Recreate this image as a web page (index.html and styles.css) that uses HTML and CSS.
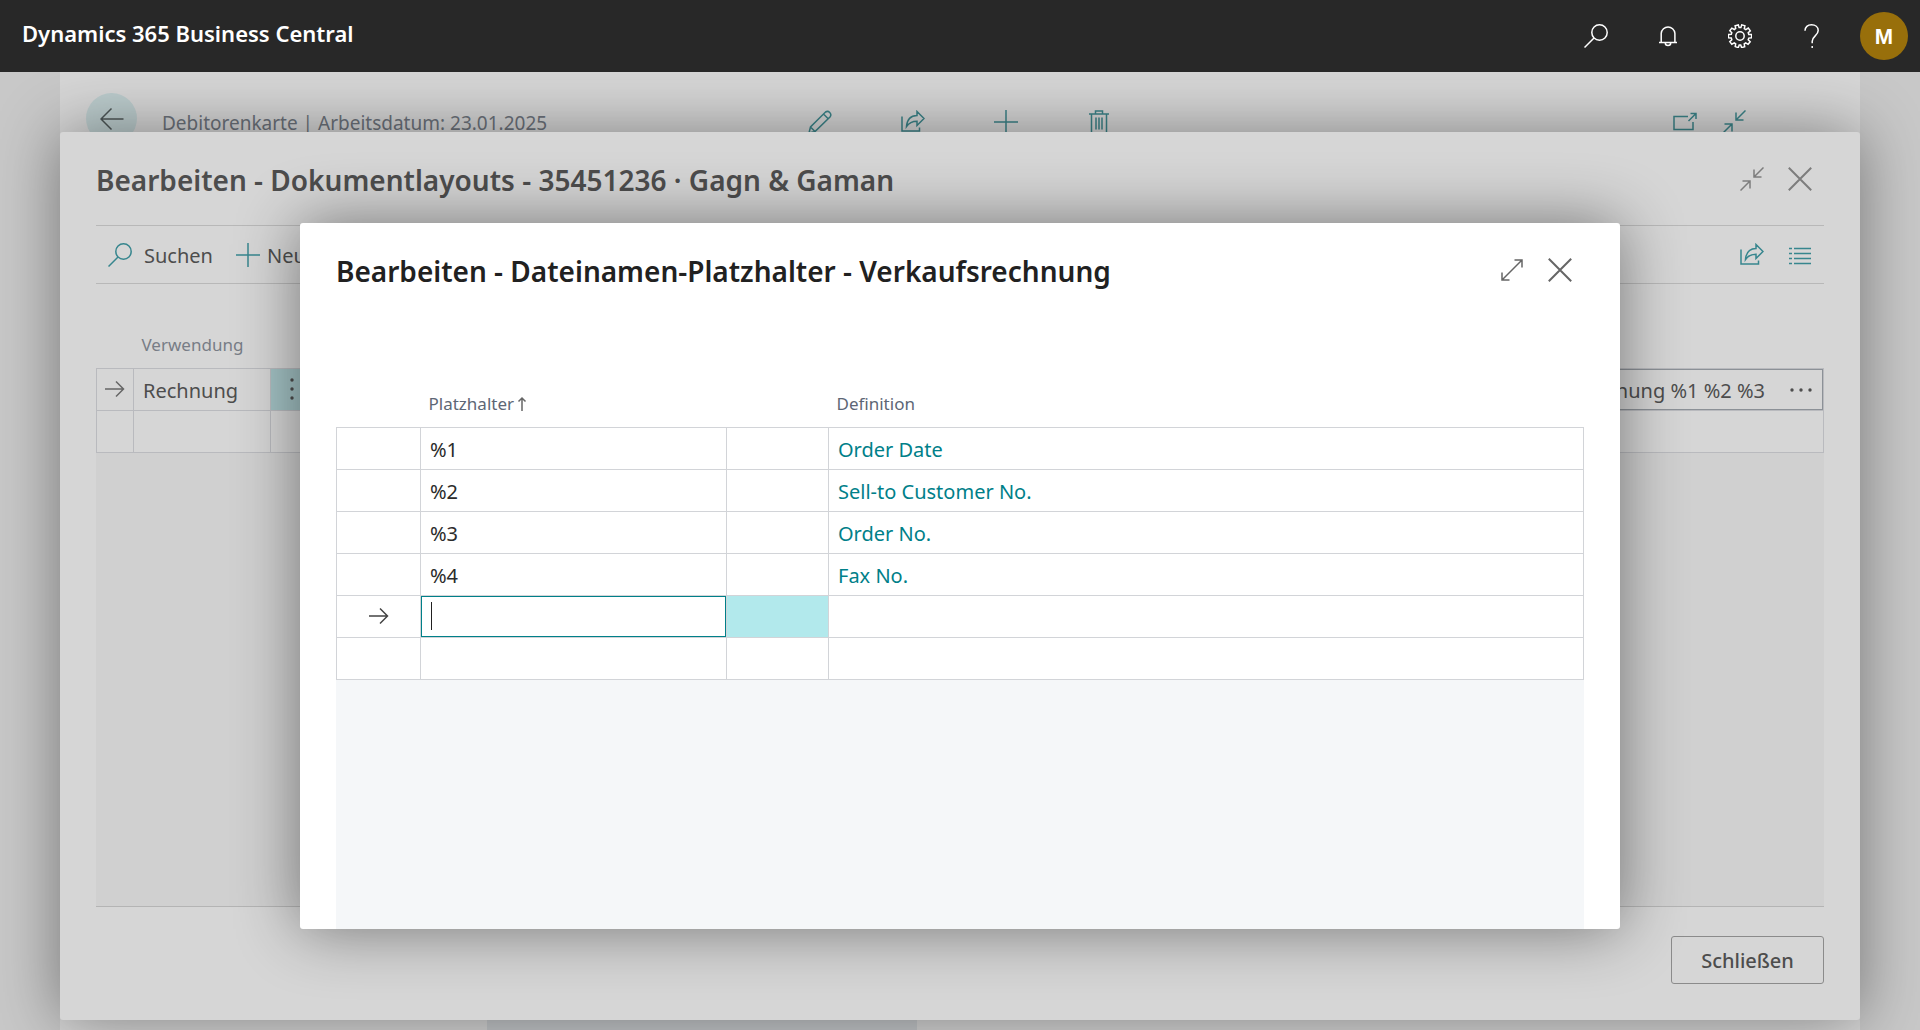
FILE: index.html
```html
<!DOCTYPE html>
<html lang="de">
<head>
<meta charset="utf-8">
<meta name="viewport" content="width=device-width, initial-scale=1">
<title>Dynamics 365 Business Central</title>
<link rel="stylesheet" href="styles.css">
</head>
<body>
<svg class="sprite" aria-hidden="true">
  <symbol id="i-search" viewBox="0 0 24 24"><circle cx="15.500" cy="8.500" r="7.700"/><path d="M10 14 .5 23.500"/></symbol>
  <symbol id="i-plus" viewBox="0 0 24 24"><path d="M12 0v24M0 12h24"/></symbol>
  <symbol id="i-share" viewBox="0 0 24 24"><path d="M1 6.500v14.500h17.500v-3.500M5.500 16.500c.5-6.500 4-10.800 10.500-11V1.500l7 7-7 7v-4.300c-4.800 0-8 1.600-10.500 5.300z"/></symbol>
  <symbol id="i-collapse" viewBox="0 0 24 24"><path d="M23.500.5 14 10M14 2.500V10h7.500M.5 23.500 10 14M2.500 14H10v7.500"/></symbol>
  <symbol id="i-expand" viewBox="0 0 24 24"><path d="M2 22 22 2M14.500 2H22v7.500M2 14.500V22h7.500"/></symbol>
  <symbol id="i-close" viewBox="0 0 24 24"><path d="m.8.800 22.400 22.400M23.200.8.800 23.200"/></symbol>
  <symbol id="i-arrow" viewBox="0 0 20 20"><path d="M0 10h18.500M11 2.500l7.500 7.500-7.500 7.500"/></symbol>
</svg>

<header class="topbar">
  <a class="brand" href="#">Dynamics 365 Business Central</a>
  <nav class="topbar-actions" aria-label="Globale Aktionen">
    <button class="top-button" type="button" aria-label="Suchen"><svg class="icon"><use href="#i-search"/></svg></button>
    <button class="top-button" type="button" aria-label="Benachrichtigungen"><svg class="icon" viewBox="0 0 24 24"><path d="M3 18.500h18M5.200 18.500V9.300a6.900 7.300 0 0 1 13.700 0v9.200M9.300 19a2.700 2.500 0 0 0 5.400 0"/></svg></button>
    <button class="top-button" type="button" aria-label="Einstellungen"><svg class="icon" viewBox="0 0 24 24"><circle cx="12" cy="12" r="4.200"/><path d="M10.300.9h0l.8 2.700h1.800l.8-2.700 3.200.9-.6 2.800 1.500 1 2.500-1.500 2 2.700-2.100 1.900.6 1.700 2.800.1v3.300l-2.800.3-.6 1.600 2 2-2.100 2.600-2.400-1.500-1.500 1.100.5 2.800-3.100.9-.9-2.700h-1.500l-.9 2.700-3.100-1 .5-2.700-1.400-1.100-2.500 1.400-2-2.600 2-1.900-.5-1.700-2.900-.3v-3.200l2.900-.2.500-1.600-2-2 2-2.600 2.500 1.400 1.400-1.100-.6-2.700z"/></svg></button>
    <button class="top-button" type="button" aria-label="Hilfe"><svg class="icon" viewBox="0 0 24 24"><path d="M5 6.800C5 3 7.700.8 11.500.8s6.700 2.200 6.700 5.700c0 5-6 5.700-6 10.700v2M12.200 22v2"/></svg></button>
    <button class="top-button" type="button" aria-label="Konto"><span class="avatar">M</span></button>
  </nav>
</header>

<main class="workspace">
  <section class="card-page">
    <div class="card-head">
      <button class="back" type="button" aria-label="Zurück"><svg class="icon" viewBox="0 0 24 24"><path d="M23.500 12H1M11.500 1.500 1 12l10.500 10.500"/></svg></button>
      <p class="crumb">Debitorenkarte | Arbeitsdatum: 23.01.2025</p>
      <div class="card-actions">
        <button class="tool" type="button" aria-label="Bearbeiten"><svg class="icon" viewBox="0 0 24 24"><path d="M1 23l1.500-6L17.500 2a3.400 3.400 0 0 1 4.700 4.700L7 21.500zM15.500 4l4.700 4.700M2.500 17l4.500 4.500"/></svg></button>
        <button class="tool" type="button" aria-label="Teilen"><svg class="icon"><use href="#i-share"/></svg></button>
        <button class="tool" type="button" aria-label="Neu"><svg class="icon"><use href="#i-plus"/></svg></button>
        <button class="tool" type="button" aria-label="Löschen"><svg class="icon" viewBox="0 0 24 24"><path d="M2 4h20M4.500 4v19h15V4M8.500 4V1h7v3M9 7.500v12M12 7.500v12M15 7.500v12"/></svg></button>
      </div>
      <div class="card-window">
        <button class="tool" type="button" aria-label="In neuem Fenster öffnen"><svg class="icon" viewBox="0 0 24 24"><path d="M15 6.500H1v13h19V12M15.500 11 23 3.500M17.500 3.500H23V9"/></svg></button>
        <button class="tool" type="button" aria-label="Verkleinern"><svg class="icon"><use href="#i-collapse"/></svg></button>
      </div>
    </div>
    <div class="card-tile"></div>
  </section>
</main>

<div class="layer layer-back">
  <section class="dialog dialog-back" role="dialog" aria-labelledby="t1">
    <div class="dialog-head">
      <h1 class="dialog-title" id="t1">Bearbeiten - Dokumentlayouts - 35451236 · Gagn &amp; Gaman</h1>
      <div class="dialog-window">
        <button class="tool" type="button" aria-label="Verkleinern"><svg class="icon"><use href="#i-collapse"/></svg></button>
        <button class="tool close" type="button" aria-label="Dialog schließen"><svg class="icon"><use href="#i-close"/></svg></button>
      </div>
    </div>
    <div class="toolbar">
      <button class="command" type="button"><svg class="icon"><use href="#i-search"/></svg><span class="label">Suchen</span></button>
      <button class="command" type="button"><svg class="icon"><use href="#i-plus"/></svg><span class="label">Neu</span></button>
      <div class="toolbar-end">
        <button class="tool" type="button" aria-label="Teilen"><svg class="icon"><use href="#i-share"/></svg></button>
        <button class="tool" type="button" aria-label="Listenansicht"><svg class="icon" viewBox="0 0 24 24"><path d="M1 5.500h3M6 5.500h17M1 10.500h3M6 10.500h17M1 15.500h3M6 15.500h17M1 20.500h3M6 20.500h17"/></svg></button>
      </div>
    </div>
    <div class="sheet">
      <table class="grid">
        <colgroup><col class="c-mark"><col class="c-use"><col class="c-menu"><col></colgroup>
        <thead><tr><th></th><th scope="col">Verwendung</th><th></th><th></th></tr></thead>
        <tbody>
          <tr><td class="mark"><svg class="icon"><use href="#i-arrow"/></svg></td><td>Rechnung</td>
            <td class="menu"><button class="row-menu" type="button" aria-label="Zeilenmenü"><svg class="icon dots" viewBox="0 0 24 24"><circle cx="12" cy="3" r="1.700"/><circle cx="12" cy="12" r="1.700"/><circle cx="12" cy="21" r="1.700"/></svg></button></td>
            <td class="edit"><div class="lookup"><input class="lookup-input" type="text" aria-label="Dateiname" value="Rechnung %1 %2 %3"><button class="row-menu" type="button" aria-label="Auswählen"><svg class="icon dots" viewBox="0 0 24 24"><circle cx="3" cy="12" r="1.700"/><circle cx="12" cy="12" r="1.700"/><circle cx="21" cy="12" r="1.700"/></svg></button></div></td></tr>
          <tr><td></td><td></td><td></td><td></td></tr>
        </tbody>
      </table>
    </div>
    <div class="dialog-foot"><button class="primary" type="button">Schließen</button></div>
  </section>
</div>

<div class="layer layer-front">
  <section class="dialog dialog-front" role="dialog" aria-modal="true" aria-labelledby="t2">
    <div class="dialog-head">
      <h2 class="dialog-title" id="t2">Bearbeiten - Dateinamen-Platzhalter - Verkaufsrechnung</h2>
      <div class="dialog-window">
        <button class="tool" type="button" aria-label="Vergrößern"><svg class="icon"><use href="#i-expand"/></svg></button>
        <button class="tool close" type="button" aria-label="Dialog schließen"><svg class="icon"><use href="#i-close"/></svg></button>
      </div>
    </div>
    <div class="sheet">
      <table class="grid">
        <colgroup><col class="p-mark"><col class="p-name"><col class="p-menu"><col></colgroup>
        <thead><tr><th></th><th scope="col"><span class="sort">Platzhalter<svg class="icon sort-icon" viewBox="0 0 10 16"><path d="M5 15V2M1.500 5.500 5 2l3.500 3.500"/></svg></span></th><th></th><th scope="col">Definition</th></tr></thead>
        <tbody>
          <tr><td></td><td>%1</td><td></td><td><a href="#">Order Date</a></td></tr>
          <tr><td></td><td>%2</td><td></td><td><a href="#">Sell-to Customer No.</a></td></tr>
          <tr><td></td><td>%3</td><td></td><td><a href="#">Order No.</a></td></tr>
          <tr><td></td><td>%4</td><td></td><td><a href="#">Fax No.</a></td></tr>
          <tr><td class="mark"><svg class="icon"><use href="#i-arrow"/></svg></td><td class="edit"><input class="cell-input" type="text" aria-label="Platzhalter"></td><td class="active"></td><td></td></tr>
          <tr><td></td><td></td><td></td><td></td></tr>
        </tbody>
      </table>
    </div>
  </section>
</div>
</body>
</html>
```
FILE: styles.css
```css
*, *::before, *::after { box-sizing: border-box; }

html, body { height: 100%; }

body {
  margin: 0;
  display: flex;
  flex-direction: column;
  overflow: hidden;
  background: #c8c8c8;
  color: #2b2b2b;
  font: 20px/28px "Segoe UI", "Noto Sans", sans-serif;
}

h1, h2, p { margin: 0; }
a { color: #008089; text-decoration: none; }
button, input { font: inherit; color: inherit; }
button { padding: 0; border: 0; background: none; }

.sprite { display: none; }

.icon {
  display: block;
  flex: none;
  width: 24px;
  height: 24px;
  fill: none;
  stroke: currentColor;
  stroke-width: 1.5;
}

.dots { fill: currentColor; stroke: none; }

/* Top bar */
.topbar {
  position: relative;
  z-index: 3;
  flex: none;
  display: flex;
  align-items: center;
  justify-content: space-between;
  height: 72px;
  padding-left: 22px;
  background: #282828;
  color: #fff;
}

.brand {
  padding-bottom: 6px;
  color: #fff;
  font-size: 22px;
  font-weight: 600;
}

.topbar-actions { display: flex; }

.top-button {
  display: grid;
  place-items: center;
  width: 72px;
  height: 72px;
}

.avatar {
  width: 48px;
  height: 48px;
  border-radius: 50%;
  background: #986f0b;
  font: bold 22px/50px "Liberation Sans", sans-serif;
  text-align: center;
}

/* Page behind the dialogs */
.workspace {
  flex: 1;
  display: flex;
  padding: 0 60px;
}

.card-page {
  flex: 1;
  display: flex;
  flex-direction: column;
  justify-content: space-between;
  background: #d6d6d6;
}

.card-head {
  display: grid;
  grid-template-columns: 51px 389px 1fr auto;
  align-items: center;
  column-gap: 25px;
  padding: 21px 114px 0 26px;
  color: #3b8388;
}

.back {
  display: grid;
  place-items: center;
  width: 51px;
  height: 51px;
  border-radius: 50%;
  background: #bccccd;
  color: #4d5556;
}

.crumb {
  padding-top: 8px;
  color: #6c727b;
  font-size: 19px;
  white-space: nowrap;
}

.card-actions {
  display: flex;
  gap: 69px;
  padding: 6px 0 0 232px;
}

.card-window {
  display: flex;
  gap: 25px;
  padding-top: 6px;
}

.card-tile {
  width: 430px;
  height: 24px;
  margin-left: 427px;
  background: #c5c8cb;
}

/* Dialogs */
.layer {
  position: absolute;
  inset: 0;
  display: flex;
}

.layer-back { z-index: 1; padding: 132px 60px 10px; }
.layer-front { z-index: 2; padding: 223px 300px 101px; }

.dialog {
  flex: 1;
  display: flex;
  flex-direction: column;
  min-width: 0;
  padding: 0 36px;
  border-radius: 3px;
  overflow: hidden;
}

.dialog-back {
  background: #d6d6d6;
  color: #4d4d4d;
  box-shadow: 0 0 64px rgba(0, 0, 0, 0.42);
}

.dialog-front {
  background: #fff;
  box-shadow: 0 0 64px rgba(0, 0, 0, 0.46);
}

.dialog-head {
  flex: none;
  display: flex;
  align-items: center;
  justify-content: space-between;
  height: 93px;
  padding: 0 12px 0 0;
}

.dialog-title {
  padding-top: 2px;
  color: #212121;
  font-size: 28px;
  font-weight: 600;
  line-height: 40px;
  white-space: nowrap;
}

.dialog-back .dialog-title { color: #4d4d4d; }

.dialog-window { display: flex; gap: 24px; color: #666; }
.dialog-back .dialog-window { color: #7d7d7d; }
.close .icon { stroke-width: 2; }

.toolbar {
  flex: none;
  display: flex;
  align-items: center;
  gap: 23px;
  height: 59px;
  padding: 0 12px;
  border: solid #b8b8b8;
  border-width: 1px 0;
}

.command {
  display: flex;
  align-items: center;
  gap: 7px;
}

.command:first-child { gap: 12px; }
.label { padding-top: 2px; }
.toolbar .icon { color: #37868e; }
.toolbar-end { display: flex; gap: 24px; margin-left: auto; }

.sheet { flex: 1; min-height: 0; }

.grid {
  width: 100%;
  table-layout: fixed;
  border-collapse: collapse;
}

.grid th {
  height: 84px;
  padding: 0 8px 11px;
  color: #5d6675;
  font-size: 17px;
  font-weight: 400;
  line-height: 24px;
  text-align: left;
  vertical-align: bottom;
}

.grid td {
  height: 42px;
  padding: 3px 9px 0;
  border: 1px solid #d2d4d8;
  background: #fff;
}

.grid .edit, .grid .menu, .grid .mark { padding: 0; }
.mark .icon { width: 20px; height: 20px; margin: 0 auto; color: #444; }

.dialog-back .sheet { background: linear-gradient(#d6d6d6 120px, #d0d0d0 120px); border-bottom: 1px solid #b4b4b4; }
.dialog-back .grid td { border-color: #b9babe; background: #d6d6d6; }
.dialog-back .grid th { color: #787d86; }
.dialog-back .grid .menu { background: #a3c2c4; }
.dialog-back .mark .icon { color: #666; }

.c-mark { width: 37px; }
.c-use { width: 137px; }
.c-menu { width: 48px; }

.row-menu {
  display: grid;
  place-items: center;
  width: 42px;
  height: 40px;
}

.lookup {
  display: flex;
  height: 41px;
  border: 1px solid #8c9197;
}

.lookup-input {
  flex: 1;
  min-width: 0;
  padding: 3px 15px 0;
  border: 0;
  background: none;
  text-align: right;
}

.dialog-front .sheet { background: linear-gradient(#fff 200px, #f5f7f9 200px); }
.dialog-front .grid th { height: 111px; }
.dialog-front .grid .active { background: #b2e9ec; }

.p-mark { width: 84px; }
.p-name { width: 306px; }
.p-menu { width: 102px; }

.sort { display: flex; align-items: center; gap: 3px; }
.sort-icon { width: 10px; height: 16px; color: #666; }

.cell-input {
  display: block;
  width: 100%;
  height: 41px;
  padding: 0 9px;
  border: 1px solid #008089;
  outline: 0;
  background: linear-gradient(#212121, #212121) 9px center / 1px 28px no-repeat #fff;
}

.dialog-foot {
  flex: none;
  display: flex;
  justify-content: flex-end;
  padding: 29px 0 36px;
}

.primary {
  width: 153px;
  height: 48px;
  padding-top: 2px;
  border: 1px solid #8b8b8b;
  border-radius: 3px;
  font-weight: 500;
}
```
